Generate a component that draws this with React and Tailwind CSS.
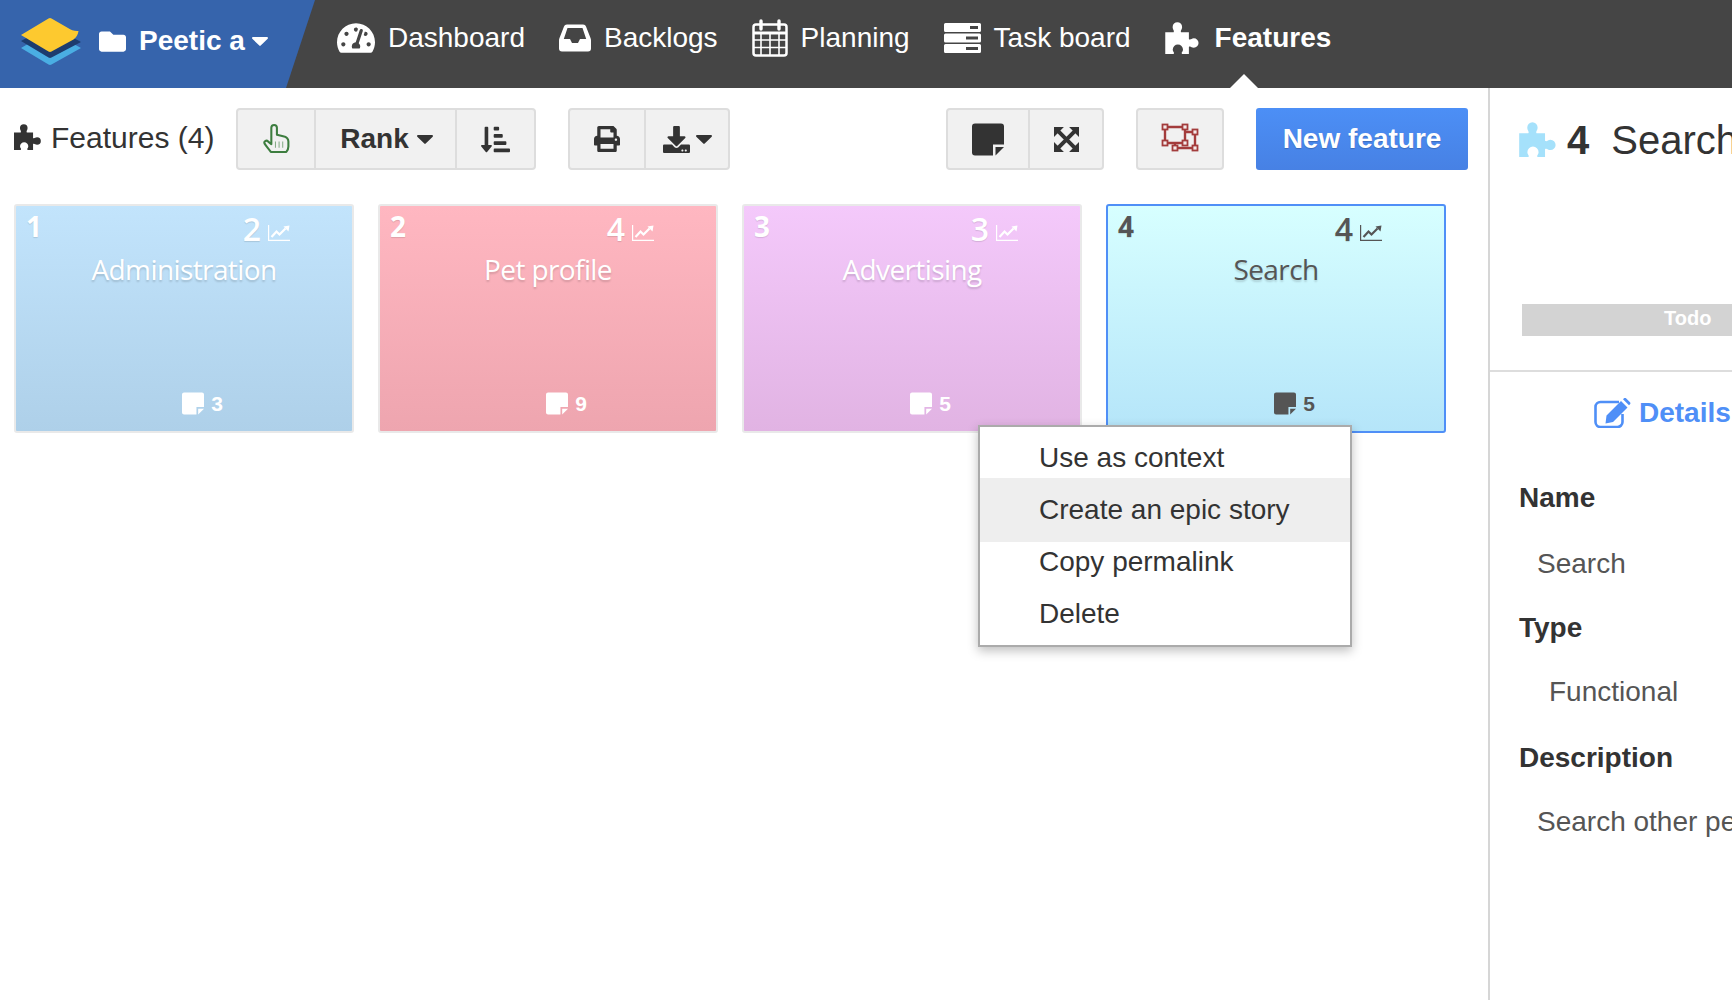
import { FaDownload, FaFolder, FaPrint, FaSortAmountDownAlt, FaTachometerAlt } from "react-icons/fa";

const CARDS = [
  { id: 1, count: 2, name: "Administration", notes: 3, style: "from-[#c2e4fc] to-[#aed0e9] border-[#e9e9e9] text-white" },
  { id: 2, count: 4, name: "Pet profile", notes: 9, style: "from-[#ffb7c1] to-[#eea5af] border-[#e9e9e9] text-white" },
  { id: 3, count: 3, name: "Advertising", notes: 5, style: "from-[#f4c9fb] to-[#e1b3e3] border-[#e9e9e9] text-white" },
  { id: 4, count: 4, name: "Search", notes: 5, style: "from-[#d7ffff] to-[#b5e5f9] border-[#4f8ff7] text-[#555]" },
];

const MENU = ["Use as context", "Create an epic story", "Copy permalink", "Delete"];

function Caret({ width = 16, height = 9 }) {
  return (
    <svg width={width} height={height} viewBox="0 0 16 9" fill="currentColor" className="shrink-0">
      <path d="M1 0h14a1 1 0 0 1 .7 1.700L8.700 8.600a1 1 0 0 1-1.400 0L.3 1.700A1 1 0 0 1 1 0z" />
    </svg>
  );
}

function Puzzle({ width, height }) {
  return (
    <svg width={width} height={height} viewBox="0 -0.5 34 32.500" fill="currentColor" className="shrink-0">
      <path d="M0 10h8.500c1-2-1-2.500-1-5.500a4.800 4.800 0 0 1 9.600 0c0 3-2 3.500-1 5.500H24v7c2 1 2.500-1 5-1a4.800 4.800 0 0 1 0 9.600c-2.500 0-3-2-5-1V32h-7c-1-2 1-2 1-4.500a5.200 5.200 0 0 0-10.400 0c0 2.500 2 2.500 1 4.500H0z" />
    </svg>
  );
}

function Sticky({ width, height }) {
  return (
    <svg width={width} height={height} viewBox="0 0 32 32" fill="currentColor" className="shrink-0">
      <path d="M3 0h26a3 3 0 0 1 3 3v18H21v11H3a3 3 0 0 1-3-3V3a3 3 0 0 1 3-3z" />
      <path d="M23.500 23.500H32L23.500 32z" />
    </svg>
  );
}

function InboxIcon() {
  return (
    <svg width="32" height="28" viewBox="0 0 32 28" fill="currentColor" className="shrink-0">
      <path
        fillRule="evenodd"
        d="M8 .5h16c1.500 0 2.500.8 3 2l4.500 11.500c.4 1 .5 1.500.5 2.500v8a3 3 0 0 1-3 3H3a3 3 0 0 1-3-3v-8c0-1 .1-1.500.5-2.500L5 2.500C5.500 1.300 6.500.5 8 .5zM8.500 4L4.800 15H11l2 4h6l2-4h6.200L23.500 4z"
      />
    </svg>
  );
}

function CalendarIcon() {
  return (
    <svg width="36" height="38" viewBox="0 0 36 38" fill="none" stroke="currentColor" className="shrink-0">
      <rect x="1.500" y="5.500" width="33" height="31" rx="2.500" strokeWidth="2.500" />
      <path d="M1 14h34" strokeWidth="3" />
      <path d="M9 14v22M18 14v22M27 14v22M2 21h32M2 28.500h32" strokeWidth="1.600" />
      <path d="M9 2v8M27 2v8" strokeWidth="3.400" strokeLinecap="round" />
    </svg>
  );
}

function ServerIcon() {
  return (
    <svg width="37" height="30" viewBox="0 0 37 30" fill="currentColor" className="shrink-0">
      <path
        fillRule="evenodd"
        d="M1.500 0h34A1.500 1.500 0 0 1 37 1.500v6A1.500 1.500 0 0 1 35.500 9h-34A1.500 1.500 0 0 1 0 7.500v-6A1.500 1.500 0 0 1 1.500 0zM26 3v3h8V3zM1.500 10.500h34A1.500 1.500 0 0 1 37 12v6a1.500 1.500 0 0 1-1.500 1.500h-34A1.500 1.500 0 0 1 0 18v-6a1.500 1.500 0 0 1 1.500-1.500zM22 13.500v3h12v-3zM1.500 21h34a1.500 1.500 0 0 1 1.500 1.500v6a1.500 1.500 0 0 1-1.500 1.500h-34A1.500 1.500 0 0 1 0 28.500v-6A1.500 1.500 0 0 1 1.500 21zM22 24v3h12v-3z"
      />
    </svg>
  );
}

function HandIcon() {
  return (
    <svg width="27" height="30" viewBox="0 0 26 29" fill="none" stroke="#3d7d3f" className="shrink-0">
      <path
        strokeWidth="2"
        strokeLinejoin="round"
        d="M7.500 27C5 23.500 3 21.500 1.500 19c-1-2 1.500-4 3.500-2L8 19.500V3.700a2.700 2.700 0 0 1 5.400 0V10.500l6 1.300c3 .6 5.100 2 5.100 5v5c0 2-1 4-2 5.200z"
      />
      <path strokeWidth="1" opacity="0.6" d="M12 17v6M15.500 17v6M19 17v6" />
    </svg>
  );
}

function ExpandIcon() {
  return (
    <svg width="25" height="25" viewBox="0 0 24 24" fill="currentColor" className="shrink-0">
      <path d="M0 0h9.500L0 9.500zM24 0v9.500L14.500 0zM0 24v-9.500L9.500 24zM24 24h-9.500l9.500-9.500z" />
      <path d="M4 4l16 16M20 4L4 20" stroke="currentColor" strokeWidth="3.800" />
    </svg>
  );
}

function UngroupIcon() {
  const nodes = [[4, 4], [24, 4], [4, 20], [24, 20], [34, 9], [34, 25], [14, 25]];
  return (
    <svg width="38" height="29" viewBox="0 0 38 29" fill="none" stroke="#a33c3c" className="shrink-0">
      <path strokeWidth="2.400" d="M4 4h20v16H4zM24 9h10v16H14v-5" />
      {nodes.map(([x, y]) => (
        <rect key={`${x}-${y}`} x={x - 2.5} y={y - 2.5} width="5" height="5" fill="#f4e9e9" strokeWidth="1.800" />
      ))}
    </svg>
  );
}

function ChartIcon() {
  return (
    <svg width="22" height="16" viewBox="0 0 22 16" fill="none" stroke="currentColor" className="shrink-0">
      <path strokeWidth="1.200" d="M.6 0v15.300H22" />
      <path strokeWidth="2.200" d="M3.500 12l5-5.500 3 3 6-6" />
      <path fill="currentColor" stroke="none" d="M15.500 1.500L21.500.5l-1 6z" />
    </svg>
  );
}

function EditIcon() {
  return (
    <svg width="38" height="30" viewBox="0 0 38 30" fill="none" stroke="currentColor" className="shrink-0">
      <path strokeWidth="2.600" d="M25 4H6.500a5 5 0 0 0-5 5v15a5 5 0 0 0 5 5H23.500a5 5 0 0 0 5-5V16" />
      <path fill="currentColor" stroke="none" d="M12.500 17.500L27 3l6.500 6.500L19 24l-7.500 1.500zM29 1.200l1-1a1.500 1.500 0 0 1 2 0l4 4a1.500 1.500 0 0 1 0 2l-1 1z" />
    </svg>
  );
}

function Logo() {
  return (
    <svg width="62" height="49" viewBox="0 0 62 49" className="shrink-0">
      <path d="M1 31L30 14l31 17-29.500 16.500a3 3 0 0 1-3 0z" fill="#4aaee3" />
      <path d="M1 24L30 8l31 17-29.500 15.500a3 3 0 0 1-3 0z" fill="#1d3c6e" />
      <path d="M1 18L28.500 1.500a3 3 0 0 1 3 0L48 11c3 2 7 3.500 10.500 3-.5 3.500-2 6.500-5 8.500L31.500 34.500a3 3 0 0 1-3 0z" fill="#fdc92f" />
    </svg>
  );
}

function NavItem({ icon, label, active }) {
  return (
    <div className={`flex items-center text-white text-[28px] ${active ? "gap-[16px] font-bold" : "gap-[13px]"}`}>
      {icon}
      <span>{label}</span>
    </div>
  );
}

function Card({ card }) {
  return (
    <div className={`relative w-[340px] h-[229px] shrink-0 border-2 rounded-[3px] bg-gradient-to-b ${card.style}`}>
      <div className="flex items-start h-[44px] pl-[10px] pr-[62px] pt-[4px] font-['Open_Sans'] [text-shadow:0_1px_1px_rgba(0,0,0,0.12)]">
        <span className="font-bold text-[28px] leading-[32px]">{card.id}</span>
        <span className="ml-auto mr-[8px] pt-[1px] font-semibold text-[32px] leading-[36px] tracking-[-1px]">{card.count}</span>
        <span className="mt-[15px]">
          <ChartIcon />
        </span>
      </div>
      <div className="text-center font-['Open_Sans'] font-medium text-[28px] leading-[38px] tracking-[-0.6px] [text-shadow:0_2px_2px_rgba(0,0,0,0.15)]">
        {card.name}
      </div>
      <div className="absolute left-0 right-0 bottom-[16px] flex items-center justify-center gap-[7px] pl-[37px]">
        <Sticky width={22} height={23} />
        <span className="font-bold text-[21px] leading-[22px]">{card.notes}</span>
      </div>
    </div>
  );
}

function Field({ label, value, valueClass }) {
  return (
    <>
      <div className="font-bold text-[#333] h-[42px] leading-[42px]">{label}</div>
      <div className={`text-[#555] h-[42px] leading-[42px] ${valueClass}`}>{value}</div>
    </>
  );
}

export default function App() {
  return (
    <div className="relative w-[1732px] h-[1000px] overflow-hidden bg-white font-['Liberation_Sans',sans-serif] text-[#333]">
      {/* Top bar */}
      <div className="relative flex h-[88px] bg-[#454545]">
        <div className="flex items-center w-[315px] pl-[20px] pb-[6px] text-white bg-[#3664ac] [clip-path:polygon(0_0,100%_0,286px_100%,0_100%)]">
          <Logo />
          <FaFolder className="ml-[17px] text-[27px]" />
          <span className="ml-[13px] font-bold text-[28px]">Peetic a</span>
          <span className="ml-[7px]">
            <Caret />
          </span>
        </div>
        <div className="flex items-center gap-[34px] pl-[22px] pb-[12px]">
          <NavItem icon={<FaTachometerAlt className="text-[38px]" />} label="Dashboard" />
          <NavItem icon={<InboxIcon />} label="Backlogs" />
          <NavItem icon={<CalendarIcon />} label="Planning" />
          <NavItem icon={<ServerIcon />} label="Task board" />
          <NavItem active icon={<Puzzle width={34} height={32} />} label="Features" />
        </div>
        <div className="absolute left-[1230px] bottom-0 w-[28px] h-[14px] bg-white [clip-path:polygon(50%_0,100%_100%,0_100%)]" />
      </div>

      <div className="flex h-[912px]">
        {/* Main column */}
        <div className="relative w-[1488px] shrink-0">
          <div className="flex items-center h-[62px] mt-[20px] pl-[14px] pr-[20px]">
            <div className="flex items-center gap-[10px] w-[199px] shrink-0 pb-[4px] whitespace-nowrap">
              <Puzzle width={27} height={26} />
              <span className="text-[30px]">Features (4)</span>
            </div>

            <div className="ml-[23px] flex shrink-0 h-full w-[300px] border-2 border-[#ddd] rounded-[4px] bg-[#f1f1f1]">
              <div className="w-[78px] flex items-center justify-center border-r-2 border-[#ddd]">
                <HandIcon />
              </div>
              <div className="w-[141px] flex items-center justify-center gap-[8px] pl-[2px] border-r-2 border-[#ddd] font-bold text-[28px]">
                Rank <Caret />
              </div>
              <div className="flex-1 flex items-center justify-center">
                <FaSortAmountDownAlt className="text-[29px]" />
              </div>
            </div>

            <div className="ml-[32px] flex shrink-0 h-full w-[162px] border-2 border-[#ddd] rounded-[4px] bg-[#f1f1f1]">
              <div className="w-[76px] flex items-center justify-center border-r-2 border-[#ddd]">
                <FaPrint className="text-[26px]" />
              </div>
              <div className="flex-1 flex items-center justify-center gap-[6px]">
                <FaDownload className="text-[27px]" />
                <Caret />
              </div>
            </div>

            <div className="ml-auto flex shrink-0 h-full w-[158px] border-2 border-[#ddd] rounded-[4px] bg-[#f1f1f1]">
              <div className="w-[82px] flex items-center justify-center border-r-2 border-[#ddd]">
                <Sticky width={32} height={33} />
              </div>
              <div className="flex-1 flex items-center justify-center">
                <ExpandIcon />
              </div>
            </div>

            <div className="ml-[32px] flex shrink-0 items-center justify-center h-full w-[88px] border-2 border-[#ddd] rounded-[4px] bg-[#f1f1f1]">
              <span className="mb-[3px]">
                <UngroupIcon />
              </span>
            </div>

            <div className="ml-[32px] flex shrink-0 items-center justify-center h-full w-[212px] rounded-[3px] bg-gradient-to-b from-[#4c8ff6] to-[#4781e4] text-white font-bold text-[28px] [text-shadow:0_1px_1px_rgba(0,0,0,0.2)]">
              New feature
            </div>
          </div>

          <div className="flex gap-[24px] pl-[14px] mt-[34px]">
            {CARDS.map((card) => (
              <Card key={card.id} card={card} />
            ))}
          </div>
        </div>

        {/* Detail panel */}
        <div className="flex-1 min-w-0 overflow-hidden whitespace-nowrap border-l-2 border-[#d6d6d6]">
          <div className="flex items-center h-[50px] mt-[27px] pl-[29px] text-[#333]">
            <span className="-mt-[2px] text-[#a5e1fb]">
              <Puzzle width={37} height={35} />
            </span>
            <span className="ml-[11px] font-bold text-[40px]">4</span>
            <span className="ml-[22px] text-[40px]">Search</span>
          </div>
          <div className="ml-[32px] mt-[139px] h-[32px] pl-[142px] leading-[29px] bg-[#d3d3d3] text-white font-bold text-[20px]">
            Todo
          </div>
          <div className="mt-[34px] h-[2px] bg-[#ddd]" />
          <div className="flex items-center h-[34px] mt-[24px] pl-[104px] text-[#4f8ff7] font-bold text-[28px]">
            <EditIcon />
            <span className="ml-[7px]">Details</span>
          </div>
          <div className="mt-[47px] pl-[29px] text-[28px]">
            <Field label="Name" value="Search" valueClass="pl-[18px] mt-[24px] mb-[22px]" />
            <Field label="Type" value="Functional" valueClass="pl-[30px] mt-[22px] mb-[24px]" />
            <Field label="Description" value="Search other pets" valueClass="pl-[18px] mt-[22px] mb-[24px]" />
          </div>
        </div>
      </div>

      {/* Context menu */}
      <div className="absolute left-[978px] top-[425px] w-[374px] h-[222px] py-[5px] border-2 border-[#ababab] bg-white shadow-[0_4px_10px_rgba(0,0,0,0.25)] text-[28px] text-[#333]">
        {MENU.map((item, i) => (
          <div
            key={item}
            className={`pl-[59px] h-[52px] leading-[52px] ${i === 1 ? "box-content -my-[6px] py-[6px] bg-[#eee]" : ""}`}
          >
            {item}
          </div>
        ))}
      </div>
    </div>
  );
}
